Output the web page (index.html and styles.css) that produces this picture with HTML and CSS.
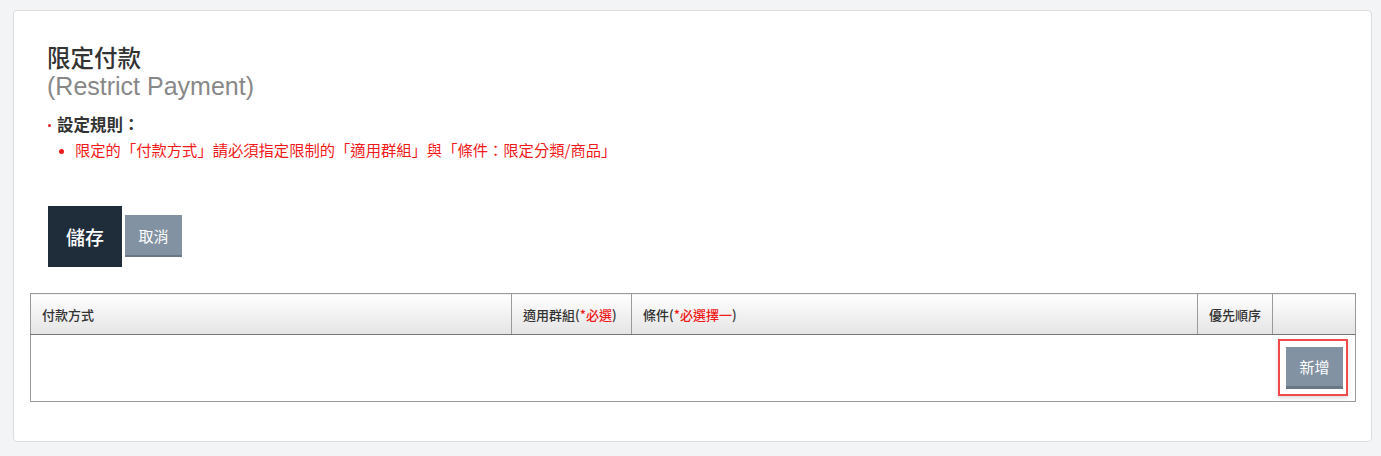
FILE: index.html
```html
<!DOCTYPE html>
<html lang="zh-Hant">
<head>
<meta charset="utf-8">
<title>限定付款</title>
<link rel="stylesheet" href="styles.css">
</head>
<body>
<div class="card">
  <div class="intro">
    <h1 class="title">限定付款</h1>
    <div class="subtitle">(Restrict Payment)</div>
    <div class="rules">
      <div class="rules-head"><span class="dot"></span>設定規則：</div>
      <ul class="rules-list">
        <li>限定的「付款方式」請必須指定限制的「適用群組」與「條件：限定分類/商品」</li>
      </ul>
    </div>
    <div class="actions">
      <button class="btn btn-save">儲存</button>
      <button class="btn btn-cancel">取消</button>
    </div>
  </div>
  <table class="grid">
    <colgroup>
      <col class="c1"><col class="c2"><col class="c3"><col class="c4"><col class="c5">
    </colgroup>
    <thead>
      <tr>
        <th>付款方式</th>
        <th>適用群組(<span class="req">*必選</span>)</th>
        <th>條件(<span class="req">*必選擇一</span>)</th>
        <th>優先順序</th>
        <th></th>
      </tr>
    </thead>
    <tbody>
      <tr>
        <td colspan="5" class="add-cell"><span class="focus"><button class="btn btn-add">新增</button></span></td>
      </tr>
    </tbody>
  </table>
</div>
</body>
</html>
```
FILE: styles.css
```css
html, body {
  margin: 0;
  padding: 0;
}
body {
  background: #f3f4f6;
  font-family: "Liberation Sans", "Noto Sans CJK TC", sans-serif;
  color: #333;
}
.card {
  margin: 10px 9px 0 13px;
  height: 432px;
  box-sizing: border-box;
  background: #fff;
  border: 1px solid #dcdcdc;
  border-radius: 4px;
  padding: 0 16px;
}
.intro {
  padding: 31px 0 0 17px;
}
.title {
  margin: 0;
  font-size: 23.5px;
  font-weight: 500;
  line-height: 30px;
  color: #333;
  font-family: "Noto Sans CJK TC", sans-serif;
}
.subtitle {
  font-size: 25px;
  line-height: 28px;
  color: #888;
  font-weight: 400;
  font-family: "Liberation Sans", sans-serif;
}
.rules {
  margin-top: 12px;
}
.rules-head {
  display: flex;
  align-items: center;
  font-size: 16.5px;
  line-height: 24px;
  font-weight: 700;
  color: #333;
  font-family: "Noto Sans CJK TC", sans-serif;
}
.dot {
  width: 3px;
  height: 3px;
  background: #e02020;
  border-radius: 50%;
  margin: 3px 6px 0 1px;
}
.rules-list {
  margin: 3px 0 0;
  padding-left: 28px;
  font-size: 15.3px;
  line-height: 20px;
  color: #f01a1a;
  font-family: "Noto Sans CJK TC", sans-serif;
}
.rules-list li::marker {
  font-size: 12px;
}
.actions {
  display: flex;
  align-items: flex-start;
  gap: 3px;
  margin-top: 47px;
  padding-left: 1px;
}
.btn {
  border: 0;
  color: #fff;
  font-family: "Noto Sans CJK TC", sans-serif;
  cursor: pointer;
  padding: 0;
}
.btn-save {
  width: 74px;
  height: 61px;
  background: #1f2c3a;
  font-size: 19px;
  font-weight: 500;
}
.btn-cancel {
  margin-top: 9px;
  width: 57px;
  height: 42px;
  background: #8292a2;
  border-bottom: 2px solid #6a7885;
  font-size: 15px;
}
.grid {
  margin-top: 26px;
  width: 1325px;
  border-collapse: collapse;
  table-layout: fixed;
  font-family: "Noto Sans CJK TC", sans-serif;
}
.c1 { width: 481px; }
.c2 { width: 120px; }
.c3 { width: 566px; }
.c4 { width: 75px; }
.c5 { width: 83px; }
.grid th {
  height: 40px;
  padding: 0 0 0 11px;
  text-align: left;
  font-size: 13px;
  font-weight: 500;
  color: #333;
  background: linear-gradient(#ffffff, #e4e4e4);
  border: 1px solid #9a9a9a;
  border-bottom-color: #777;
}
.req {
  color: #f01a1a;
}
.grid td {
  border: 1px solid #9a9a9a;
  height: 66px;
  padding: 0;
}
.add-cell {
  text-align: right;
  vertical-align: top;
}
.focus {
  display: inline-block;
  margin: 4px 7px 0 0;
  padding: 6px 3px 5px 6px;
  border: 2px solid #f24a4a;
  box-shadow: 0 2px 4px rgba(0,0,0,0.15);
  line-height: 0;
}
.btn-add {
  width: 57px;
  height: 42px;
  background: #8292a2;
  border-bottom: 3px solid #6a7885;
  font-size: 15px;
  line-height: 39px;
}
```
